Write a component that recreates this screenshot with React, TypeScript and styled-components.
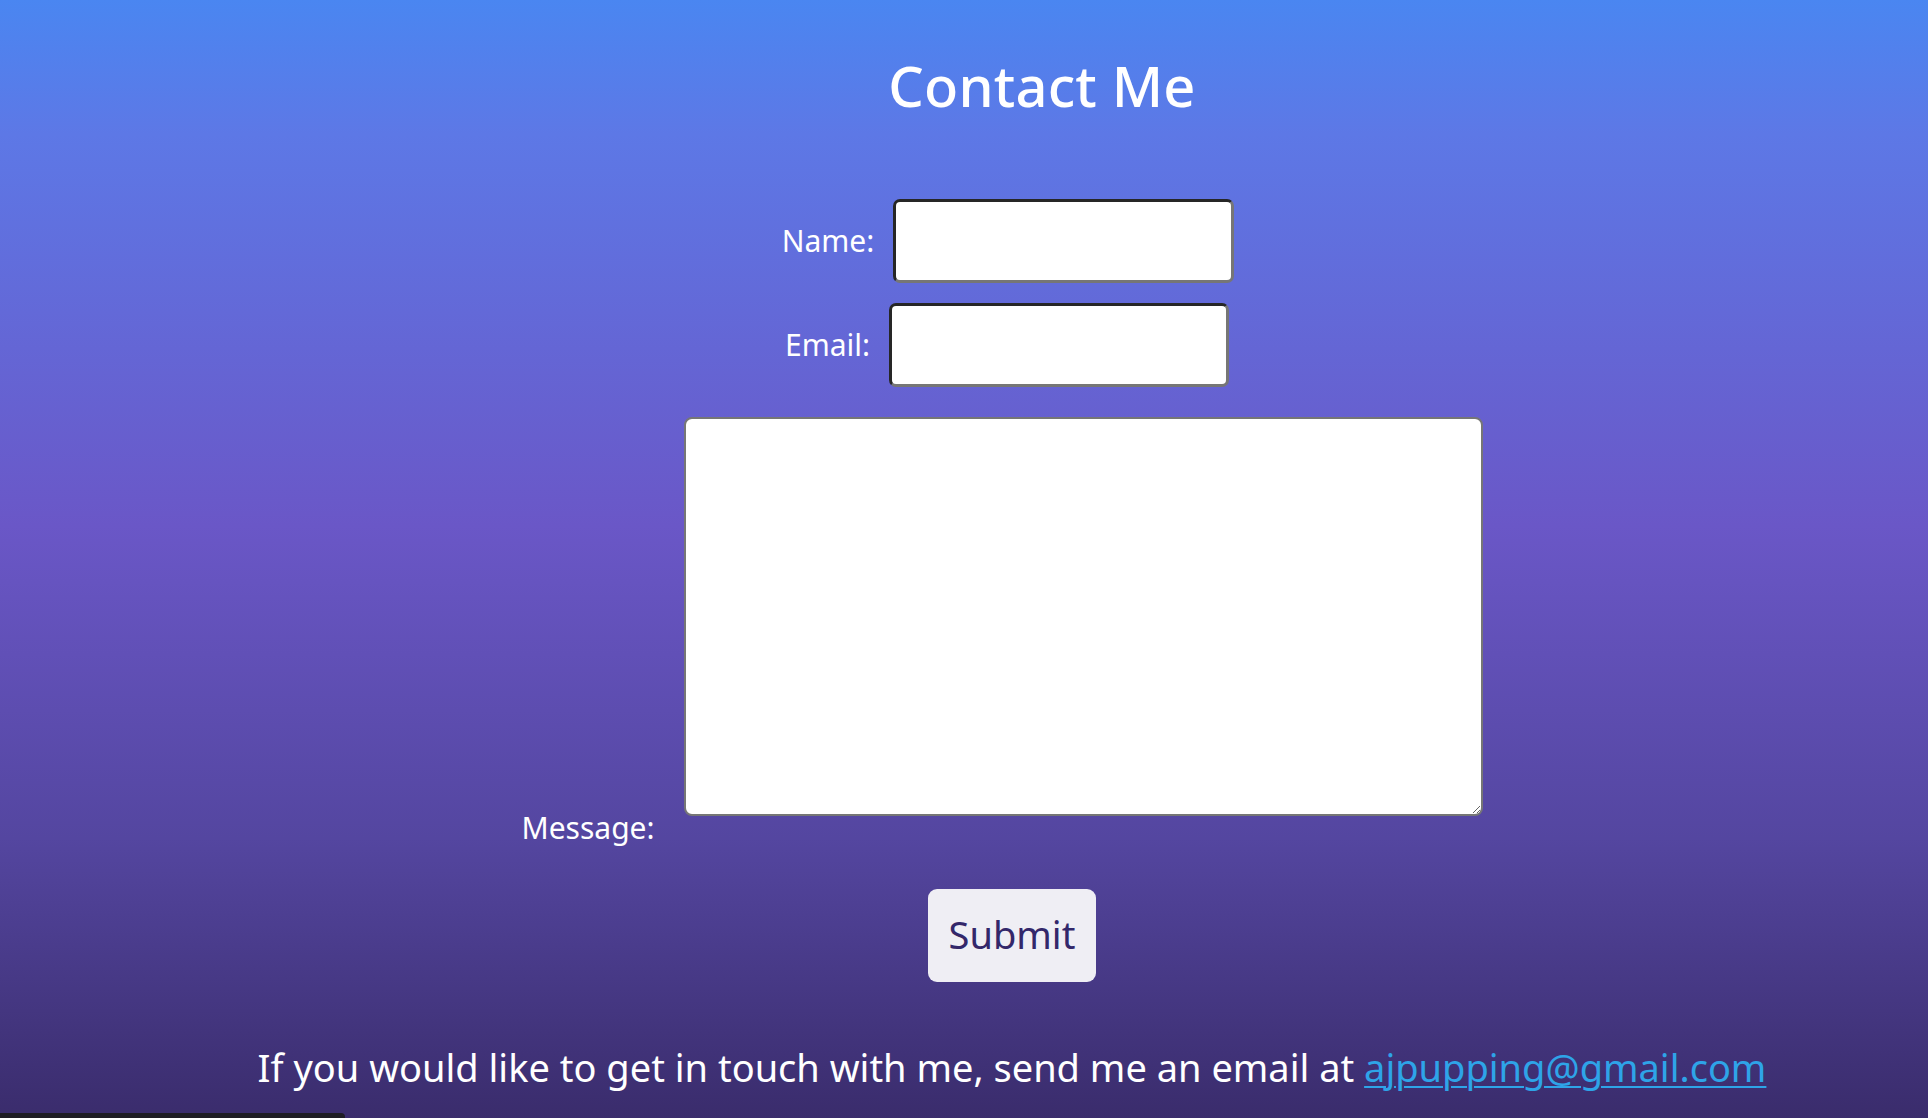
import React from "react";
import styled, { createGlobalStyle } from "styled-components";

const GlobalStyle = createGlobalStyle`
  html, body {
    margin: 0;
    padding: 0;
  }
  body {
    font-family: "Noto Sans", "Open Sans", sans-serif;
    overflow: hidden;
  }
`;

const Page = styled.main`
  box-sizing: border-box;
  min-height: 1118px;
  padding: 57px 0 0 86px;
  background: linear-gradient(
    to bottom,
    #4a86f1 0%,
    #5d78e6 12%,
    #6a57c7 47%,
    #5446a0 75%,
    #3a2c6c 100%
  );
  color: #ffffff;
  display: flex;
  flex-direction: column;
  align-items: center;
`;

const Title = styled.h1`
  margin: 0 0 86px 70px;
  font-size: 56px;
  line-height: 56px;
  font-weight: 500;
  letter-spacing: 0.2px;
`;

const Form = styled.form`
  display: flex;
  flex-direction: column;
  align-items: center;
`;

const Row = styled.div<{ $gapAfter: number; $align?: string; $shift?: number }>`
  display: flex;
  align-items: ${(p) => p.$align ?? "center"};
  justify-content: center;
  margin-bottom: ${(p) => p.$gapAfter}px;
  margin-left: ${(p) => p.$shift ?? 0}px;
`;

const Label = styled.label<{ $gap: number }>`
  font-size: 30px;
  line-height: 36px;
  margin-right: ${(p) => p.$gap}px;
  white-space: nowrap;
`;

const TextInput = styled.input<{ $w: number }>`
  box-sizing: border-box;
  width: ${(p) => p.$w}px;
  height: 84px;
  border-width: 3px;
  border-style: solid;
  border-color: #262626 #767676 #767676 #262626;
  border-radius: 7px;
  background: #ffffff;
  font-size: 24px;
  padding: 4px 10px;
  outline: none;
`;

const MessageArea = styled.textarea`
  box-sizing: border-box;
  width: 799px;
  height: 399px;
  border: 2px solid #767676;
  border-radius: 8px;
  background: #ffffff;
  font-size: 20px;
  padding: 8px;
  margin-bottom: 30px;
  outline: none;
`;

const SubmitButton = styled.button`
  box-sizing: border-box;
  width: 168px;
  height: 93px;
  margin-left: 10px;
  border: none;
  border-radius: 9px;
  background: #efeef4;
  color: #33276a;
  font-family: "Noto Sans", "Open Sans", sans-serif;
  font-size: 38px;
  line-height: 1;
  padding: 0 0 4px 0;
  font-weight: 400;
  cursor: pointer;
`;

const Footer = styled.p`
  margin: 63px 0 0 10px;
  font-size: 38px;
  line-height: 44px;
  white-space: nowrap;
`;

const MailLink = styled.a`
  color: #2ea4e8;
  text-decoration: underline;
  text-decoration-thickness: 2px;
  text-underline-offset: 4px;
`;

const ScrollThumb = styled.div`
  position: fixed;
  left: 0;
  bottom: 0;
  width: 345px;
  height: 5px;
  background: #1e1c24;
  border-top-right-radius: 4px;
`;

export default function App() {
  return (
    <>
      <GlobalStyle />
      <Page>
        <Title>Contact Me</Title>
        <Form onSubmit={(e) => e.preventDefault()}>
          <Row $gapAfter={20} $shift={2}>
            <Label $gap={19} htmlFor="name">Name:</Label>
            <TextInput id="name" type="text" $w={341} />
          </Row>
          <Row $gapAfter={30}>
            <Label $gap={19} htmlFor="email">Email:</Label>
            <TextInput id="email" type="email" $w={340} />
          </Row>
          <Row $gapAfter={43} $align="flex-end" $shift={-10}>
            <Label $gap={29} htmlFor="message">Message:</Label>
            <MessageArea id="message" />
          </Row>
          <SubmitButton type="submit">Submit</SubmitButton>
        </Form>
        <Footer>
          If you would like to get in touch with me, send me an email at{" "}
          <MailLink href="mailto:ajpupping@gmail.com">ajpupping@gmail.com</MailLink>
        </Footer>
      </Page>
      <ScrollThumb />
    </>
  );
}
